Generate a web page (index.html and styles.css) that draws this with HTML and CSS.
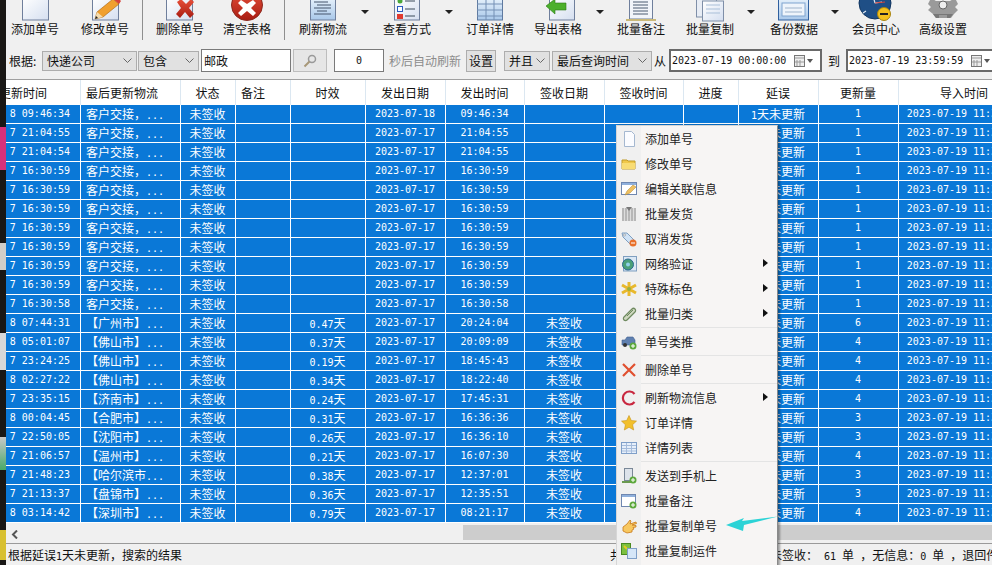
FILE: index.html
```html
<!DOCTYPE html>
<html lang="zh-CN">
<head>
<meta charset="utf-8">
<title>快递单号查询</title>
<link rel="stylesheet" href="styles.css">
</head>
<body>
<svg class="defs" aria-hidden="true"><defs>
<linearGradient id="pg" x1="0" y1="0" x2="1" y2="1"><stop offset="0" stop-color="#ffffff"/><stop offset="1" stop-color="#d5dff0"/></linearGradient>
<linearGradient id="rd" x1="0" y1="0" x2="0" y2="1"><stop offset="0" stop-color="#e8503a"/><stop offset="1" stop-color="#a81c12"/></linearGradient>
<linearGradient id="bl" x1="0" y1="0" x2="0" y2="1"><stop offset="0" stop-color="#e6f1fb"/><stop offset="1" stop-color="#a9c8ea"/></linearGradient>
</defs></svg>
<div class="app">
<div class="strip"><b class="s1"></b><b class="s2"></b><b class="s3"></b><b class="s4"></b><b class="s5"></b><b class="s6"></b><b class="s7"></b><b class="s8"></b><b class="s9"></b><b class="s10"></b></div>
<div class="main">
<div class="toolbar">
<div class="tb first"><svg width="32" height="21"><rect x="3.500" y="-2" width="26" height="22" fill="url(#pg)" stroke="#6f7f9c"/></svg><span>添加单号</span></div>
<div class="tb m8"><svg width="32" height="21"><rect x="3.500" y="-2" width="26" height="22" fill="url(#pg)" stroke="#6f7f9c"/><path d="M6 19l2-7L24-1l6 5L14 17z" fill="#f0a030" stroke="#a8620e" stroke-width=".6"/><path d="M6 19l2-7 6 5z" fill="#f5dcae"/><path d="M6 19l1-3 2 2z" fill="#222"/><path d="M24-1l6 5 2-3-5-5z" fill="#d8443a"/></svg><span>修改单号</span></div>
<i class="sep m4"></i>
<div class="tb m4"><svg width="32" height="21"><rect x="2.500" y="-2" width="26" height="22" fill="url(#pg)" stroke="#6f7f9c"/><path d="M13 2l4-3 5 5 5-5 3 3-5 6 5 6-4 4-5-6-5 6-4-4 5-6z" fill="url(#rd)"/></svg><span>删除单号</span></div>
<div class="tb"><svg width="34" height="21"><circle cx="17" cy="5" r="15.500" fill="url(#rd)" stroke="#8c2a20"/><path d="M11 0l6 4 6-4 3 3-5 5 5 5-3 3-6-5-6 5-3-3 5-5-5-5z" fill="#fff"/></svg><span>清空表格</span></div>
<i class="sep m4"></i>
<div class="tb m5"><svg width="32" height="21"><rect x="3.500" y="-2" width="25" height="22" fill="url(#bl)" stroke="#6f7f9c"/><path d="M7 2h14M10 5h14M7 8h17M10 11h10M7 14h17" stroke="#44556c"/></svg><span>刷新物流</span></div>
<i class="drop m2"></i>
<div class="tb m2"><svg width="32" height="21"><rect x="3.500" y="-2" width="25" height="22" fill="url(#pg)" stroke="#6f7f9c"/><circle cx="9" cy="1" r="2.500" fill="#4aa83a"/><rect x="6.500" y="6.500" width="5" height="5" fill="#fff" stroke="#2a5bc0"/><path d="M6 14h6v5H6z" fill="#e03a30"/><path d="M14 1h10M14 9h10M14 16h10" stroke="#3a4a5a"/></svg><span>查看方式</span></div>
<i class="drop m2"></i>
<div class="tb"><svg width="32" height="21"><rect x="3.500" y="-2" width="25" height="22" fill="url(#bl)" stroke="#5f7aa0"/><path d="M3 4h25M3 10h25M3 16h25M12 -2v22M20 -2v22" stroke="#7590b5"/></svg><span>订单详情</span></div>
<div class="tb m2"><svg width="32" height="21"><rect x="7.500" y="-2" width="25" height="22" fill="url(#pg)" stroke="#6f7f9c"/><path d="M4 6L13-1v4h11v7H13v4z" fill="#4cb02c" stroke="#2c7a18" stroke-width=".6"/></svg><span>导出表格</span></div>
<i class="drop m2"></i>
<div class="tb"><svg width="36" height="21"><rect x="6.500" y="-2" width="23" height="21" fill="#f2f5fa" stroke="#6f7f9c"/><path d="M10 2h15M10 5h15M10 8h15M10 11h15M10 14h15" stroke="#4a5a70"/><path d="M3 20h30" stroke="#c9b878" stroke-width="2"/></svg><span>批量备注</span></div>
<div class="tb m3"><svg width="32" height="21"><rect x="2.500" y="-2" width="20" height="19" fill="#e8edf5" stroke="#7f8fa8"/><rect x="8.500" y="1" width="21" height="20" fill="url(#pg)" stroke="#7f8fa8"/><path d="M12 5h14M12 9h14M12 13h14" stroke="#a9bfd8"/></svg><span>批量复制</span></div>
<i class="drop"></i>
<div class="tb m3"><svg width="32" height="21"><rect x=".5" y="-2" width="30" height="22" fill="url(#bl)" stroke="#2f5f9e"/><rect x="4" y="3" width="23" height="13" fill="#eef4fb" stroke="#7fa4cf"/><path d="M7 8h17M7 12h17" stroke="#9fb4cc"/></svg><span>备份数据</span></div>
<i class="drop"></i>
<div class="tb"><svg width="36" height="22"><circle cx="17" cy="4" r="16" fill="#1f4f86" stroke="#123660"/><path d="M5 14l3-2M17 4L15-3M17 4l7-1" stroke="#dfe8f2" stroke-width="1.200"/><path d="M17 4l10-1" stroke="#d8443a"/><circle cx="26" cy="15" r="6.500" fill="#f3c21e" stroke="#a98410"/><rect x="22" y="14" width="8" height="2" fill="#222"/></svg><span>会员中心</span></div>
<div class="tb"><svg width="34" height="21"><path d="M5-2l5 3h14l5-3 3 6-3 3 3 3-4 4-3 4H10l-3-4-5-4 3-3-3-3z" fill="#9a9a9a"/><path d="M10 18l3 0v-3h8v3h3l3-4-20 0z" fill="#777"/><circle cx="17" cy="5" r="4" fill="#eee" stroke="#666"/></svg><span>高级设置</span></div>
</div>
<div class="filter">
<span class="lab">根据:</span>
<div class="combo c1"><span>快递公司</span><svg width="9" height="5"><path d="M.5.5l4 4 4-4" fill="none" stroke="#666"/></svg></div>
<div class="combo c2"><span>包含</span><svg width="9" height="5"><path d="M.5.5l4 4 4-4" fill="none" stroke="#666"/></svg></div>
<div class="box b1">邮政</div>
<div class="search"><svg width="14" height="14"><circle cx="9" cy="5" r="3.500" fill="none" stroke="#999" stroke-width="1.500"/><path d="M6.500 7.500L1.500 12.500" stroke="#a89878" stroke-width="2"/></svg></div>
<div class="box b2"><span class="n">0</span></div>
<span class="hint">秒后自动刷新</span>
<div class="setbtn">设置</div>
<div class="combo c3"><span>并且</span><svg width="9" height="5"><path d="M.5.5l4 4 4-4" fill="none" stroke="#666"/></svg></div>
<div class="combo c4"><span>最后查询时间</span><svg width="9" height="5"><path d="M.5.5l4 4 4-4" fill="none" stroke="#666"/></svg></div>
<span class="from">从</span>
<div class="date d1"><span class="n">2023-07-19 00:00:00</span><svg class="cal" width="19" height="12"><rect x=".5" y=".5" width="10" height="11" fill="#eee" stroke="#777"/><path d="M1 3h9M3 5v6M6 5v6M1 7h9" stroke="#999"/><path d="M13 4h6l-3 4z" fill="#555"/></svg></div>
<span class="to">到</span>
<div class="date d2"><span class="n">2023-07-19 23:59:59</span><svg class="cal" width="19" height="12"><rect x=".5" y=".5" width="10" height="11" fill="#eee" stroke="#777"/><path d="M1 3h9M3 5v6M6 5v6M1 7h9" stroke="#999"/><path d="M13 4h6l-3 4z" fill="#555"/></svg></div>
</div>
<div class="tablewrap">
<table class="grid">
<colgroup><col class="k1"><col class="k2"><col class="k3"><col class="k3"><col class="k4"><col class="k5"><col class="k6"><col class="k5"><col class="k6"><col class="k3"><col class="k5"><col class="k5"><col class="k7"></colgroup>
<thead><tr><th>最后更新时间</th><th class="l">最后更新物流</th><th>状态</th><th class="l">备注</th><th>时效</th><th>发出日期</th><th>发出时间</th><th>签收日期</th><th>签收时间</th><th>进度</th><th>延误</th><th>更新量</th><th>导入时间</th></tr></thead>
<tbody>
<tr><td class="n t">8 09:46:34</td><td class="l">客户交接，<span class="n">...</span></td><td>未签收</td><td></td><td></td><td class="n">2023-07-18</td><td class="n">09:46:34</td><td></td><td></td><td></td><td><span class="n">1</span>天未更新</td><td class="n">1</td><td class="n">2023-07-19 11:33:21</td></tr>
<tr><td class="n t">7 21:04:55</td><td class="l">客户交接，<span class="n">...</span></td><td>未签收</td><td></td><td></td><td class="n">2023-07-17</td><td class="n">21:04:55</td><td></td><td></td><td></td><td><span class="n">1</span>天未更新</td><td class="n">1</td><td class="n">2023-07-19 11:33:21</td></tr>
<tr><td class="n t">7 21:04:54</td><td class="l">客户交接，<span class="n">...</span></td><td>未签收</td><td></td><td></td><td class="n">2023-07-17</td><td class="n">21:04:55</td><td></td><td></td><td></td><td><span class="n">1</span>天未更新</td><td class="n">1</td><td class="n">2023-07-19 11:33:21</td></tr>
<tr><td class="n t">7 16:30:59</td><td class="l">客户交接，<span class="n">...</span></td><td>未签收</td><td></td><td></td><td class="n">2023-07-17</td><td class="n">16:30:59</td><td></td><td></td><td></td><td><span class="n">1</span>天未更新</td><td class="n">1</td><td class="n">2023-07-19 11:33:21</td></tr>
<tr><td class="n t">7 16:30:59</td><td class="l">客户交接，<span class="n">...</span></td><td>未签收</td><td></td><td></td><td class="n">2023-07-17</td><td class="n">16:30:59</td><td></td><td></td><td></td><td><span class="n">1</span>天未更新</td><td class="n">1</td><td class="n">2023-07-19 11:33:21</td></tr>
<tr><td class="n t">7 16:30:59</td><td class="l">客户交接，<span class="n">...</span></td><td>未签收</td><td></td><td></td><td class="n">2023-07-17</td><td class="n">16:30:59</td><td></td><td></td><td></td><td><span class="n">1</span>天未更新</td><td class="n">1</td><td class="n">2023-07-19 11:33:21</td></tr>
<tr><td class="n t">7 16:30:59</td><td class="l">客户交接，<span class="n">...</span></td><td>未签收</td><td></td><td></td><td class="n">2023-07-17</td><td class="n">16:30:59</td><td></td><td></td><td></td><td><span class="n">1</span>天未更新</td><td class="n">1</td><td class="n">2023-07-19 11:33:21</td></tr>
<tr><td class="n t">7 16:30:59</td><td class="l">客户交接，<span class="n">...</span></td><td>未签收</td><td></td><td></td><td class="n">2023-07-17</td><td class="n">16:30:59</td><td></td><td></td><td></td><td><span class="n">1</span>天未更新</td><td class="n">1</td><td class="n">2023-07-19 11:33:21</td></tr>
<tr><td class="n t">7 16:30:59</td><td class="l">客户交接，<span class="n">...</span></td><td>未签收</td><td></td><td></td><td class="n">2023-07-17</td><td class="n">16:30:59</td><td></td><td></td><td></td><td><span class="n">1</span>天未更新</td><td class="n">1</td><td class="n">2023-07-19 11:33:21</td></tr>
<tr><td class="n t">7 16:30:59</td><td class="l">客户交接，<span class="n">...</span></td><td>未签收</td><td></td><td></td><td class="n">2023-07-17</td><td class="n">16:30:59</td><td></td><td></td><td></td><td><span class="n">1</span>天未更新</td><td class="n">1</td><td class="n">2023-07-19 11:33:21</td></tr>
<tr><td class="n t">7 16:30:58</td><td class="l">客户交接，<span class="n">...</span></td><td>未签收</td><td></td><td></td><td class="n">2023-07-17</td><td class="n">16:30:58</td><td></td><td></td><td></td><td><span class="n">1</span>天未更新</td><td class="n">1</td><td class="n">2023-07-19 11:33:21</td></tr>
<tr><td class="n t">8 07:44:31</td><td class="l">【广州市】<span class="n">...</span></td><td>未签收</td><td></td><td><span class="n">0.47</span>天</td><td class="n">2023-07-17</td><td class="n">20:24:04</td><td>未签收</td><td></td><td></td><td><span class="n">1</span>天未更新</td><td class="n">6</td><td class="n">2023-07-19 11:33:21</td></tr>
<tr><td class="n t">8 05:01:07</td><td class="l">【佛山市】<span class="n">...</span></td><td>未签收</td><td></td><td><span class="n">0.37</span>天</td><td class="n">2023-07-17</td><td class="n">20:09:09</td><td>未签收</td><td></td><td></td><td><span class="n">1</span>天未更新</td><td class="n">4</td><td class="n">2023-07-19 11:33:21</td></tr>
<tr><td class="n t">7 23:24:25</td><td class="l">【佛山市】<span class="n">...</span></td><td>未签收</td><td></td><td><span class="n">0.19</span>天</td><td class="n">2023-07-17</td><td class="n">18:45:43</td><td>未签收</td><td></td><td></td><td><span class="n">1</span>天未更新</td><td class="n">4</td><td class="n">2023-07-19 11:33:21</td></tr>
<tr><td class="n t">8 02:27:22</td><td class="l">【佛山市】<span class="n">...</span></td><td>未签收</td><td></td><td><span class="n">0.34</span>天</td><td class="n">2023-07-17</td><td class="n">18:22:40</td><td>未签收</td><td></td><td></td><td><span class="n">1</span>天未更新</td><td class="n">4</td><td class="n">2023-07-19 11:33:21</td></tr>
<tr><td class="n t">7 23:35:15</td><td class="l">【济南市】<span class="n">...</span></td><td>未签收</td><td></td><td><span class="n">0.24</span>天</td><td class="n">2023-07-17</td><td class="n">17:45:31</td><td>未签收</td><td></td><td></td><td><span class="n">1</span>天未更新</td><td class="n">4</td><td class="n">2023-07-19 11:33:21</td></tr>
<tr><td class="n t">8 00:04:45</td><td class="l">【合肥市】<span class="n">...</span></td><td>未签收</td><td></td><td><span class="n">0.31</span>天</td><td class="n">2023-07-17</td><td class="n">16:36:36</td><td>未签收</td><td></td><td></td><td><span class="n">1</span>天未更新</td><td class="n">3</td><td class="n">2023-07-19 11:33:21</td></tr>
<tr><td class="n t">7 22:50:05</td><td class="l">【沈阳市】<span class="n">...</span></td><td>未签收</td><td></td><td><span class="n">0.26</span>天</td><td class="n">2023-07-17</td><td class="n">16:36:10</td><td>未签收</td><td></td><td></td><td><span class="n">1</span>天未更新</td><td class="n">3</td><td class="n">2023-07-19 11:33:21</td></tr>
<tr><td class="n t">7 21:06:57</td><td class="l">【温州市】<span class="n">...</span></td><td>未签收</td><td></td><td><span class="n">0.21</span>天</td><td class="n">2023-07-17</td><td class="n">16:07:30</td><td>未签收</td><td></td><td></td><td><span class="n">1</span>天未更新</td><td class="n">4</td><td class="n">2023-07-19 11:33:21</td></tr>
<tr><td class="n t">7 21:48:23</td><td class="l">【哈尔滨市<span class="n">...</span></td><td>未签收</td><td></td><td><span class="n">0.38</span>天</td><td class="n">2023-07-17</td><td class="n">12:37:01</td><td>未签收</td><td></td><td></td><td><span class="n">1</span>天未更新</td><td class="n">3</td><td class="n">2023-07-19 11:33:21</td></tr>
<tr><td class="n t">7 21:13:37</td><td class="l">【盘锦市】<span class="n">...</span></td><td>未签收</td><td></td><td><span class="n">0.36</span>天</td><td class="n">2023-07-17</td><td class="n">12:35:51</td><td>未签收</td><td></td><td></td><td><span class="n">1</span>天未更新</td><td class="n">3</td><td class="n">2023-07-19 11:33:21</td></tr>
<tr><td class="n t">8 03:14:42</td><td class="l">【深圳市】<span class="n">...</span></td><td>未签收</td><td></td><td><span class="n">0.79</span>天</td><td class="n">2023-07-17</td><td class="n">08:21:17</td><td>未签收</td><td></td><td></td><td><span class="n">1</span>天未更新</td><td class="n">4</td><td class="n">2023-07-19 11:33:21</td></tr>
</tbody>
</table>
</div>
<div class="hscroll">
<svg class="larrow" width="8" height="9"><path d="M6 .5L2 4.500l4 4" fill="none" stroke="#555" stroke-width="2"/></svg>
<div class="thumb"></div>
</div>
<div class="status">
<span class="st1">根据延误<span class="n">1</span>天未更新，搜索的结果</span>
<span class="st2">共 <span class="n">1000</span> 单，已签收： <span class="n">0</span> 单</span>
<span class="st3">未签收：<span class="n"> 61 </span>单<span class="n"> </span>，无信息：<span class="n">0 </span>单<span class="n"> </span>，退回件：<span class="n">0 </span>单</span>
</div>
</div>
<div class="menu">
<div class="mi"><svg width="16" height="16"><path d="M3.500.5h7l3 3v12h-10z" fill="#fbfcff" stroke="#a5b8d0"/></svg><span>添加单号</span></div>
<div class="mi"><svg width="16" height="16"><path d="M1 4h5l1 1h7v8H1z" fill="#f0c84a" stroke="#c09a28"/><path d="M1 7h13v6H1z" fill="#f8dc74"/></svg><span>修改单号</span></div>
<div class="mi"><svg width="16" height="16"><rect x=".5" y="1.500" width="15" height="12" fill="#fff" stroke="#6f87b0"/><path d="M1 2h14v2H1z" fill="#8fb0dc"/><path d="M4 14l2-4 6-6 3 2-6 6z" fill="#f0c060" stroke="#b08830" stroke-width=".5"/></svg><span>编辑关联信息</span></div>
<div class="mi"><svg width="16" height="16"><path d="M1 2h14v13H1z" fill="#ddd"/><path d="M2 2v13M5 2v13M8 2v13M11 2v13M14 2v13" stroke="#aaa" stroke-width="1.500"/><path d="M5 1h6l-3 4z" fill="#777"/></svg><span>批量发货</span></div>
<div class="mi"><svg width="16" height="16"><path d="M1 2h5l8 8-4 4-8-8z" fill="#cfe2f5" stroke="#7f9fc0"/><circle cx="3.500" cy="4" r="1" fill="#fff" stroke="#777" stroke-width=".5"/><circle cx="12" cy="12" r="3.500" fill="#e8702a"/><rect x="10" y="11.500" width="4" height="1" fill="#fff"/></svg><span>取消发货</span></div>
<div class="mi"><svg width="16" height="16"><rect x="2.500" y=".5" width="13" height="14.500" fill="#dbe8f5" stroke="#7f9fc0"/><circle cx="7" cy="8.500" r="5.500" fill="#4aa078" stroke="#2a6a90"/><circle cx="7" cy="8.500" r="2" fill="#8fd0e8"/></svg><span>网络验证</span></div>
<div class="mi"><svg width="16" height="16"><path d="M8 1v14M1 4l14 8M15 4L1 12" stroke="#e8b82c" stroke-width="3"/><circle cx="8" cy="8" r="2" fill="#9ab040"/></svg><span>特殊标色</span></div>
<div class="mi"><svg width="16" height="16"><path d="M3 11l8-8a2 2 0 0 1 3 3l-8 8a1.500 1.500 0 0 1-3-3z" fill="#cfd8c0" stroke="#6f8a60" stroke-width="1.200"/><path d="M6 10l6-6" stroke="#6f8a60"/></svg><span>批量归类</span></div>
<i class="msep"></i>
<div class="mi"><svg width="16" height="16"><path d="M1 6h3l2-3h6l2 3v5H1z" fill="#5f80b0" stroke="#3f5f90" stroke-width=".6"/><circle cx="4" cy="11" r="2" fill="#333"/><circle cx="12" cy="12" r="3.500" fill="#5ca83c"/><path d="M10 12h4M12 10v4" stroke="#fff"/></svg><span>单号类推</span></div>
<i class="msep"></i>
<div class="mi"><svg width="16" height="16"><path d="M2 2l12 12M14 2L2 14" stroke="#e05030" stroke-width="2.200"/></svg><span>删除单号</span></div>
<i class="msep"></i>
<div class="mi"><svg width="16" height="16"><path d="M13.500 4A6.500 6.500 0 1 0 13.500 12" fill="none" stroke="#c82840" stroke-width="2.200"/></svg><span>刷新物流信息</span></div>
<div class="mi"><svg width="16" height="16"><path d="M8 .5l2.300 5 5.200.6-3.900 3.600 1.100 5.300L8 12.300 3.300 15l1.100-5.300L.5 6.100l5.200-.6z" fill="#f2c02c" stroke="#c8941a" stroke-width=".6"/></svg><span>订单详情</span></div>
<div class="mi"><svg width="16" height="16"><rect x=".5" y="2.500" width="15" height="11" fill="#e6effa" stroke="#7f9fc8"/><path d="M1 5.500h14M1 8.500h14M1 11h14M5.500 3v10M10.500 3v10" stroke="#a5bcdc"/></svg><span>详情列表</span></div>
<i class="msep"></i>
<div class="mi"><svg width="16" height="16"><rect x="3.500" y=".5" width="8" height="12" fill="#dde3ea" stroke="#7a8898"/><path d="M1 13h11v2H1z" fill="#6a9a50"/><circle cx="12" cy="12" r="3.500" fill="#5ca83c"/><path d="M10 12h4M12 10v4" stroke="#fff"/></svg><span>发送到手机上</span></div>
<div class="mi"><svg width="16" height="16"><rect x=".5" y="1.500" width="14" height="12" fill="#fff" stroke="#6f87b0"/><path d="M1 2h13v2H1z" fill="#8fb0dc"/><circle cx="12" cy="12" r="3.500" fill="#5ca83c"/><path d="M10 12h4M12 10v4" stroke="#fff"/></svg><span>批量备注</span></div>
<div class="mi"><svg width="16" height="16"><path d="M2 9l4-3 3-4 1 1-1 3 6-2 .5 1.500L11 7l4 .5V9l-3 .5 1 1.500-2 1 0 2-5 1-4-2z" fill="#f8c860" stroke="#c87818" stroke-width=".8"/></svg><span>批量复制单号</span></div>
<div class="mi"><svg width="16" height="16"><rect x=".5" y=".5" width="9" height="11" fill="#7cc040" stroke="#4a8a20"/><path d="M3 3l3 3" stroke="#e8c820" stroke-width="2"/><rect x="6.500" y="5.500" width="9" height="10" fill="#d5e6f8" stroke="#7f9fc8"/></svg><span>批量复制运件</span></div>
<svg class="arrow-sub s-a" width="5" height="8"><path d="M0 0l5 4-5 4z" fill="#111"/></svg>
<svg class="arrow-sub s-b" width="5" height="8"><path d="M0 0l5 4-5 4z" fill="#111"/></svg>
<svg class="arrow-sub s-c" width="5" height="8"><path d="M0 0l5 4-5 4z" fill="#111"/></svg>
<svg class="arrow-sub s-d" width="5" height="8"><path d="M0 0l5 4-5 4z" fill="#111"/></svg>
</div>
<svg class="pointer" width="54" height="16"><path d="M0 9L18 2 16 5 52 .5 18 9 17 15z" fill="#2cd3d6"/></svg>
</div>
</body>
</html>
```
FILE: styles.css
```css
* { box-sizing: border-box; }
html, body { margin: 0; padding: 0; height: 100%; overflow: hidden; }
body { font: 12px/16px "Noto Sans CJK SC", "Liberation Sans", sans-serif; color: #111; }
.defs { position: absolute; width: 0; height: 0; }
.app { position: relative; display: flex; width: 992px; height: 565px; overflow: hidden; background: #f0f0f0; }
.n { font-family: "DejaVu Sans Mono", "Liberation Mono", monospace; font-size: 10px; line-height: 1; }

.strip { flex: 0 0 6px; display: flex; flex-direction: column; background: #191715; }
.strip b { display: block; flex: none; }
.s1 { height: 127px; }
.s2 { height: 43px; background: #d8307a; }
.s3 { height: 73px; }
.s4 { height: 27px; background: #d0cdc8; }
.s5 { height: 63px; }
.s6 { height: 37px; background: #d8d8d8; }
.s7 { height: 67px; }
.s8 { height: 33px; background: linear-gradient(#c8c8c8, #48a868); }
.s9 { height: 60px; }
.s10 { height: 30px; background: #d8c030; }

.main { flex: 1; min-width: 0; display: flex; flex-direction: column; }
.toolbar { flex: none; height: 40px; display: flex; overflow: hidden; background: #f0f0f0; }
.tb { flex: 0 0 66px; margin-left: 1px; height: 40px; display: flex; flex-direction: column; align-items: center; justify-content: flex-end; padding-bottom: 3px; }
.tb span { line-height: 16px; white-space: nowrap; }
.tb svg { display: block; overflow: visible; }
.tb.first { flex-basis: 58px; margin-left: 0; }
.sep { flex: 0 0 1px; background: #8f8f8f; }
.drop { flex: 0 0 14px; margin-left: 1px; height: 8px; margin-top: 10px; position: relative; }
.drop::after { content: ""; position: absolute; left: 3px; top: 0; border: 4px solid transparent; border-top: 4px solid #222; border-bottom: 0; }
.toolbar .m2 { margin-left: 2px; }
.toolbar .m3 { margin-left: 3px; }
.toolbar .m4 { margin-left: 4px; }
.toolbar .m5 { margin-left: 5px; }
.toolbar .m8 { margin-left: 8px; }

.filter { flex: none; height: 40px; display: flex; align-items: center; padding: 2px 0 0 3px; border-bottom: 1px solid #a0a0a0; white-space: nowrap; overflow: hidden; }
.filter > * { flex: none; }
.lab { width: 33px; }
.combo { height: 20px; display: flex; align-items: center; justify-content: space-between; padding: 0 4px; background: #e1e1e1; border: 1px solid #adadad; }
.combo svg { flex: none; }
.c1 { width: 95px; }
.c2 { width: 61px; margin-left: 1px; }
.c3 { width: 46px; margin-left: 8px; }
.c4 { width: 100px; margin-left: 2px; }
.box { height: 23px; background: #fff; border: 1px solid #7a7a7a; display: flex; align-items: center; }
.b1 { width: 90px; margin-left: 2px; padding-left: 2px; }
.b2 { width: 50px; margin-left: 7px; justify-content: center; }
.search { width: 34px; height: 23px; margin-left: 2px; background: #e6e6e6; border: 1px solid #bdbdbd; display: flex; align-items: center; justify-content: center; }
.hint { margin-left: 5px; width: 72px; color: #8c8c8c; }
.setbtn { width: 30px; height: 22px; margin-left: 5px; background: #e1e1e1; border: 1px solid #adadad; text-align: center; line-height: 20px; }
.from { margin-left: 2px; width: 14px; }
.to { margin-left: 6px; width: 14px; }
.date { height: 23px; background: #fff; border: 2px solid #6a6a6a; display: flex; align-items: center; padding-left: 1px; }
.d1 { width: 153px; margin-left: 1px; }
.d2 { width: 153px; margin-left: 4px; }
.cal { margin-left: 8px; flex: none; }

.tablewrap { flex: none; height: 443px; overflow: hidden; background: #f0f0f0; }
.grid { table-layout: fixed; width: 1088px; margin-left: -63px; border-collapse: separate; border-spacing: 0; }
.k1 { width: 138px; }
.k2 { width: 100px; }
.k3 { width: 55px; }
.k4 { width: 75px; }
.k5 { width: 80px; }
.k6 { width: 79px; }
.k7 { width: 132px; }
.grid th { height: 25px; padding: 0 1px 0 0; font-weight: 400; background: #fff; border-right: 1px solid #dbe7f1; text-align: center; white-space: nowrap; overflow: hidden; }
.grid td { height: 19px; padding: 0 1px 0 0; line-height: 18px; color: #fff; background: #0a78d7; border-right: 1px solid #fff; border-bottom: 1px solid #fff; text-align: center; white-space: nowrap; overflow: hidden; }
.grid .l { text-align: left; padding-left: 5px; }
.grid .t { text-align: right; padding-right: 10px; }

.hscroll { flex: none; height: 21px; display: flex; align-items: flex-start; background: #f0f0f0; border-bottom: 1px solid #9a9a9a; padding-top: 2px; }
.larrow { margin: 5px 0 0 5px; flex: none; }
.thumb { margin-left: auto; width: 529px; height: 15px; background: #cdcdcd; }

.status { flex: 1; display: flex; align-items: center; padding-left: 2px; white-space: nowrap; overflow: hidden; background: #f0f0f0; }
.status > span { flex: none; }
.st1 { width: 602px; }
.st2 { width: 160px; }
.st3, .st3 .n { white-space: pre; }

.menu { position: absolute; left: 616px; top: 125px; width: 162px; height: 450px; background: linear-gradient(to right, #f0f0f0 24px, #f7f5f4 24px); border: 1px solid #d6d6d6; border-right-color: #8a8a8a; box-shadow: 2px 0 2px rgba(0,0,0,.35); }
.mi { height: 25px; display: flex; align-items: center; padding-left: 4px; }
.mi svg { flex: none; }
.mi span { margin-left: 8px; color: #222; }
.msep { display: block; height: 3px; padding-top: 1px; }
.msep::after { content: ""; display: block; height: 1px; margin-left: 24px; background: #e4e4e4; }
.arrow-sub { position: absolute; left: 146px; }
.s-a { top: 133px; }
.s-b { top: 158px; }
.s-c { top: 183px; }
.s-d { top: 267px; }
.pointer { position: absolute; left: 726px; top: 516px; }
```
